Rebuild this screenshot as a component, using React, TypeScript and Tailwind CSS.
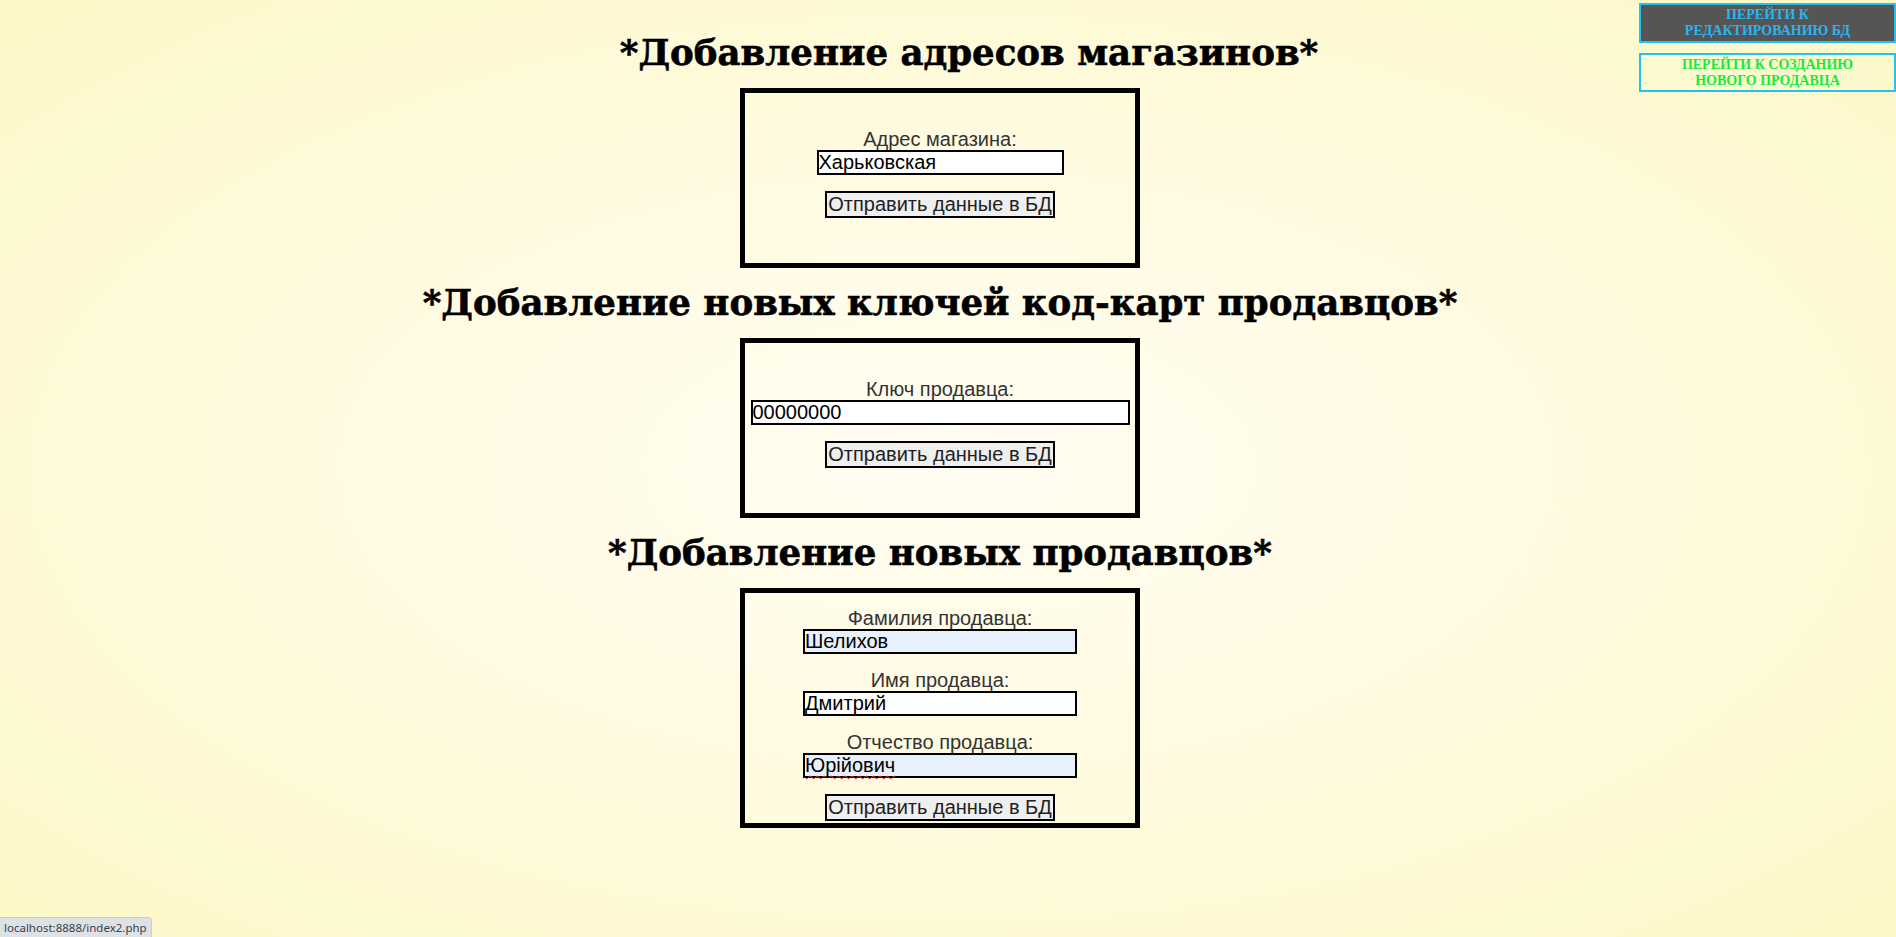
import React from "react";

const Field = ({
  label,
  value,
  width,
  filled = false,
  misspelled = false,
}: {
  label: string;
  value: string;
  width: string;
  filled?: boolean;
  misspelled?: boolean;
}) => (
  <div className="flex flex-col items-center">
    <label className="text-[20px] leading-[21px] text-[#333]">{label}</label>
    {misspelled ? (
      // spell-check squiggle under the value
      <div
        className={
          "flex h-[25px] items-center border-2 border-black text-[20px] leading-[21px] text-black " +
          width +
          (filled ? " bg-[#e8f0fe]" : " bg-white")
        }
      >
        <span className="underline decoration-wavy decoration-[#e53935] decoration-1 underline-offset-[3px]">{value}</span>
      </div>
    ) : (
      <input
        defaultValue={value}
        spellCheck={false}
        className={
          "h-[25px] border-2 border-black px-0 text-[20px] leading-[21px] text-black outline-none " +
          width +
          (filled ? " bg-[#e8f0fe]" : " bg-white")
        }
      />
    )}
  </div>
);

const SubmitButton = () => (
  <button className="h-[27px] border-2 border-black bg-[#efefef] px-[1px] text-[20px] leading-[21px] text-[#222]">
    Отправить данные в БД
  </button>
);

const Heading = ({ children, shift = "" }: { children: React.ReactNode; shift?: string }) => (
  <div className={"flex h-[70px] items-center justify-center " + shift}>
    <h1 className="whitespace-nowrap font-['DejaVu_Serif',serif] text-[35.6px] font-bold leading-none text-black [-webkit-text-stroke:0.6px_black]">
      {children}
    </h1>
  </div>
);

export default function App() {
  return (
    <div className="relative min-h-screen w-full bg-[radial-gradient(ellipse_at_center,#fffdf2_0%,#fffbe2_45%,#fdf8c6_100%)] font-['Liberation_Sans',Arial,sans-serif]">
      {/* top right links */}
      <nav className="absolute right-0 top-[3px] flex w-[257px] flex-col gap-[10px] font-['Liberation_Serif','Times_New_Roman',serif] text-[14px] font-bold uppercase leading-[16px]">
        <a className="flex h-[40px] flex-col items-center justify-center border-2 border-[#1fc3f2] bg-[#555555] text-center text-[#26b6f2]">
          <span>Перейти к</span>
          <span>редактированию БД</span>
        </a>
        <a className="flex h-[39px] flex-col items-center justify-center border-2 border-[#1fc3f2] text-center text-[#18ea3a]">
          <span>Перейти к созданию</span>
          <span>нового продавца</span>
        </a>
      </nav>

      <main className="flex flex-col items-center pr-[16px] pt-[18px]">
        <Heading shift="pl-[58px]">*Добавление адресов магазинов*</Heading>
        <form className="flex h-[180px] w-[400px] flex-col items-center justify-center gap-[16px] border-[5px] border-black pb-[10px]">
          <Field label="Адрес магазина:" value="Харьковская" width="w-[247px]" />
          <SubmitButton />
        </form>

        <Heading>*Добавление новых ключей код-карт продавцов*</Heading>
        <form className="flex h-[180px] w-[400px] flex-col items-center justify-center gap-[16px] border-[5px] border-black pb-[10px]">
          <Field label="Ключ продавца:" value="00000000" width="w-[379px]" />
          <SubmitButton />
        </form>

        <Heading>*Добавление новых продавцов*</Heading>
        <form className="flex w-[400px] flex-col items-center gap-[16px] border-[5px] border-black pb-[2px] pt-[15px]">
          <Field label="Фамилия продавца:" value="Шелихов" width="w-[274px]" filled />
          <Field label="Имя продавца:" value="Дмитрий" width="w-[274px]" />
          <Field label="Отчество продавца:" value="Юрійович" width="w-[274px]" filled misspelled />
          <SubmitButton />
        </form>
      </main>

      {/* browser status bubble */}
      <div className="fixed bottom-0 left-0 flex h-[20px] items-center rounded-tr-[4px] border-r border-t border-[#c9cdd2] bg-[#dee1e6] px-[4px] font-['Noto_Sans',sans-serif] text-[11.5px] text-[#3c4043]">
        localhost:8888/index2.php
      </div>
    </div>
  );
}
